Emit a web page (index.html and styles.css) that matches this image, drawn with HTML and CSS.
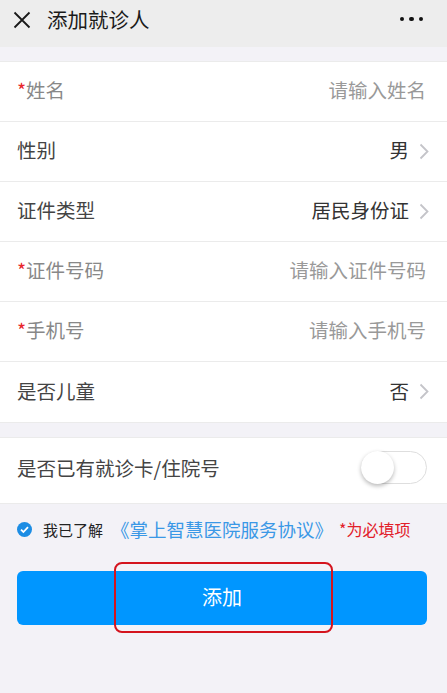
FILE: index.html
```html
<!DOCTYPE html>
<html lang="zh-CN">
<head>
<meta charset="utf-8">
<title>添加就诊人</title>
<link rel="stylesheet" href="styles.css">
</head>
<body>
<div class="page">
  <header class="nav">
    <svg class="close" width="18" height="18" viewBox="0 0 18 18"><path d="M1.5 1.5L16.5 16.5M16.5 1.5L1.5 16.5" stroke="#1a1a1a" stroke-width="1.8" fill="none"/></svg>
    <div class="title">添加就诊人</div>
    <div class="more"><span></span><span></span><span></span></div>
  </header>

  <section class="group first">
    <div class="row"><div class="label req-label"><span class="star">*</span>姓名</div><div class="ph">请输入姓名</div></div>
    <div class="row"><div class="label">性别</div><div class="val">男<svg class="chev" width="10" height="17" viewBox="0 0 10 17"><path d="M1.5 1.5L8.5 8.5L1.5 15.5" stroke="#c4c4c9" stroke-width="1.8" fill="none"/></svg></div></div>
    <div class="row"><div class="label">证件类型</div><div class="val">居民身份证<svg class="chev" width="10" height="17" viewBox="0 0 10 17"><path d="M1.5 1.5L8.5 8.5L1.5 15.5" stroke="#c4c4c9" stroke-width="1.8" fill="none"/></svg></div></div>
    <div class="row"><div class="label req-label"><span class="star">*</span>证件号码</div><div class="ph">请输入证件号码</div></div>
    <div class="row"><div class="label req-label"><span class="star">*</span>手机号</div><div class="ph">请输入手机号</div></div>
    <div class="row"><div class="label">是否儿童</div><div class="val">否<svg class="chev" width="10" height="17" viewBox="0 0 10 17"><path d="M1.5 1.5L8.5 8.5L1.5 15.5" stroke="#c4c4c9" stroke-width="1.8" fill="none"/></svg></div></div>
  </section>

  <section class="group second">
    <div class="row tall"><div class="label">是否已有就诊卡/住院号</div><div class="switch"><div class="knob"></div></div></div>
  </section>

  <div class="agree">
    <svg class="check" width="15" height="15" viewBox="0 0 15 15"><circle cx="7.5" cy="7.5" r="7.5" fill="#1c8de4"/><path d="M4 7.7L6.4 10L11 5.2" stroke="#fff" stroke-width="1.8" fill="none"/></svg>
    <span class="know">我已了解</span>
    <span class="link">《掌上智慧医院服务协议》</span>
    <span class="must">*为必填项</span>
  </div>

  <div class="btn-wrap">
    <div class="btn">添加</div>
    <div class="mark"></div>
  </div>
</div>
</body>
</html>
```

FILE: styles.css
```css
* { box-sizing: border-box; }
html, body { margin: 0; padding: 0; }
body {
  background: #f3f2f7;
  font-family: "Noto Sans CJK SC", "Noto Sans", sans-serif;
  width: 447px;
  height: 693px;
  overflow: hidden;
}
.page { position: relative; }
.nav {
  height: 47px;
  background: #ededed;
  display: flex;
  align-items: center;
  padding: 0 24px 9px 13px;
}
.close { flex: none; margin-top: 2px; }
.title {
  margin-left: 16px;
  font-size: 20.5px;
  color: #1a1a1a;
  flex: 1;
  line-height: 1;
}
.more { display: flex; gap: 5px; }
.more span { width: 4.5px; height: 4.5px; border-radius: 50%; background: #111; display: block; }

.group { background: #fff; border-top: 1px solid #ebebeb; border-bottom: 1px solid #ebebeb; }
.group.first { margin-top: 14px; }
.group.second { margin-top: 14px; }
.row {
  height: 60px;
  display: flex;
  align-items: center;
  justify-content: space-between;
  padding: 0 21px 4px 17px;
  border-bottom: 1px solid #ebebeb;
  font-size: 19.5px;
}
.row:last-child { border-bottom: none; }
.row.tall { height: 65px; padding-right: 20px; padding-bottom: 7px; }
.label { color: #444; }
.req-label { color: #888; }
.star { color: #e8262b; }
.ph { color: #999; }
.val { color: #333; display: flex; align-items: center; }
.chev { margin-left: 10px; margin-right: -3px; margin-top: 3px; }

.switch {
  width: 66px; height: 33px;
  border: 1px solid #dedede;
  border-radius: 17px;
  position: relative;
  background: #fff;
}
.knob {
  position: absolute; left: -1px; top: -1px;
  width: 33px; height: 33px; border-radius: 50%;
  background: #fff;
  box-shadow: 0 2px 4px rgba(0,0,0,0.28);
}

.agree {
  display: flex;
  align-items: center;
  padding: 5px 0 0 17px;
  height: 45px;
}
.check { flex: none; }
.know { font-size: 15px; color: #222; margin-left: 11px; }
.link { font-size: 18.5px; color: #3a98e6; margin-left: 8px; }
.must { font-size: 16px; color: #e2202a; margin-left: 6px; }

.btn-wrap { position: relative; padding: 22px 20px 0 17px; }
.btn {
  height: 54px;
  background: #0096ff;
  border-radius: 6px;
  color: #fff;
  font-size: 20px;
  display: flex;
  align-items: center;
  justify-content: center;
  padding-bottom: 3px;
}
.mark {
  position: absolute;
  left: 114px; top: 13px;
  width: 219px; height: 71px;
  border: 2px solid #d4141e;
  border-radius: 8px;
}
```
